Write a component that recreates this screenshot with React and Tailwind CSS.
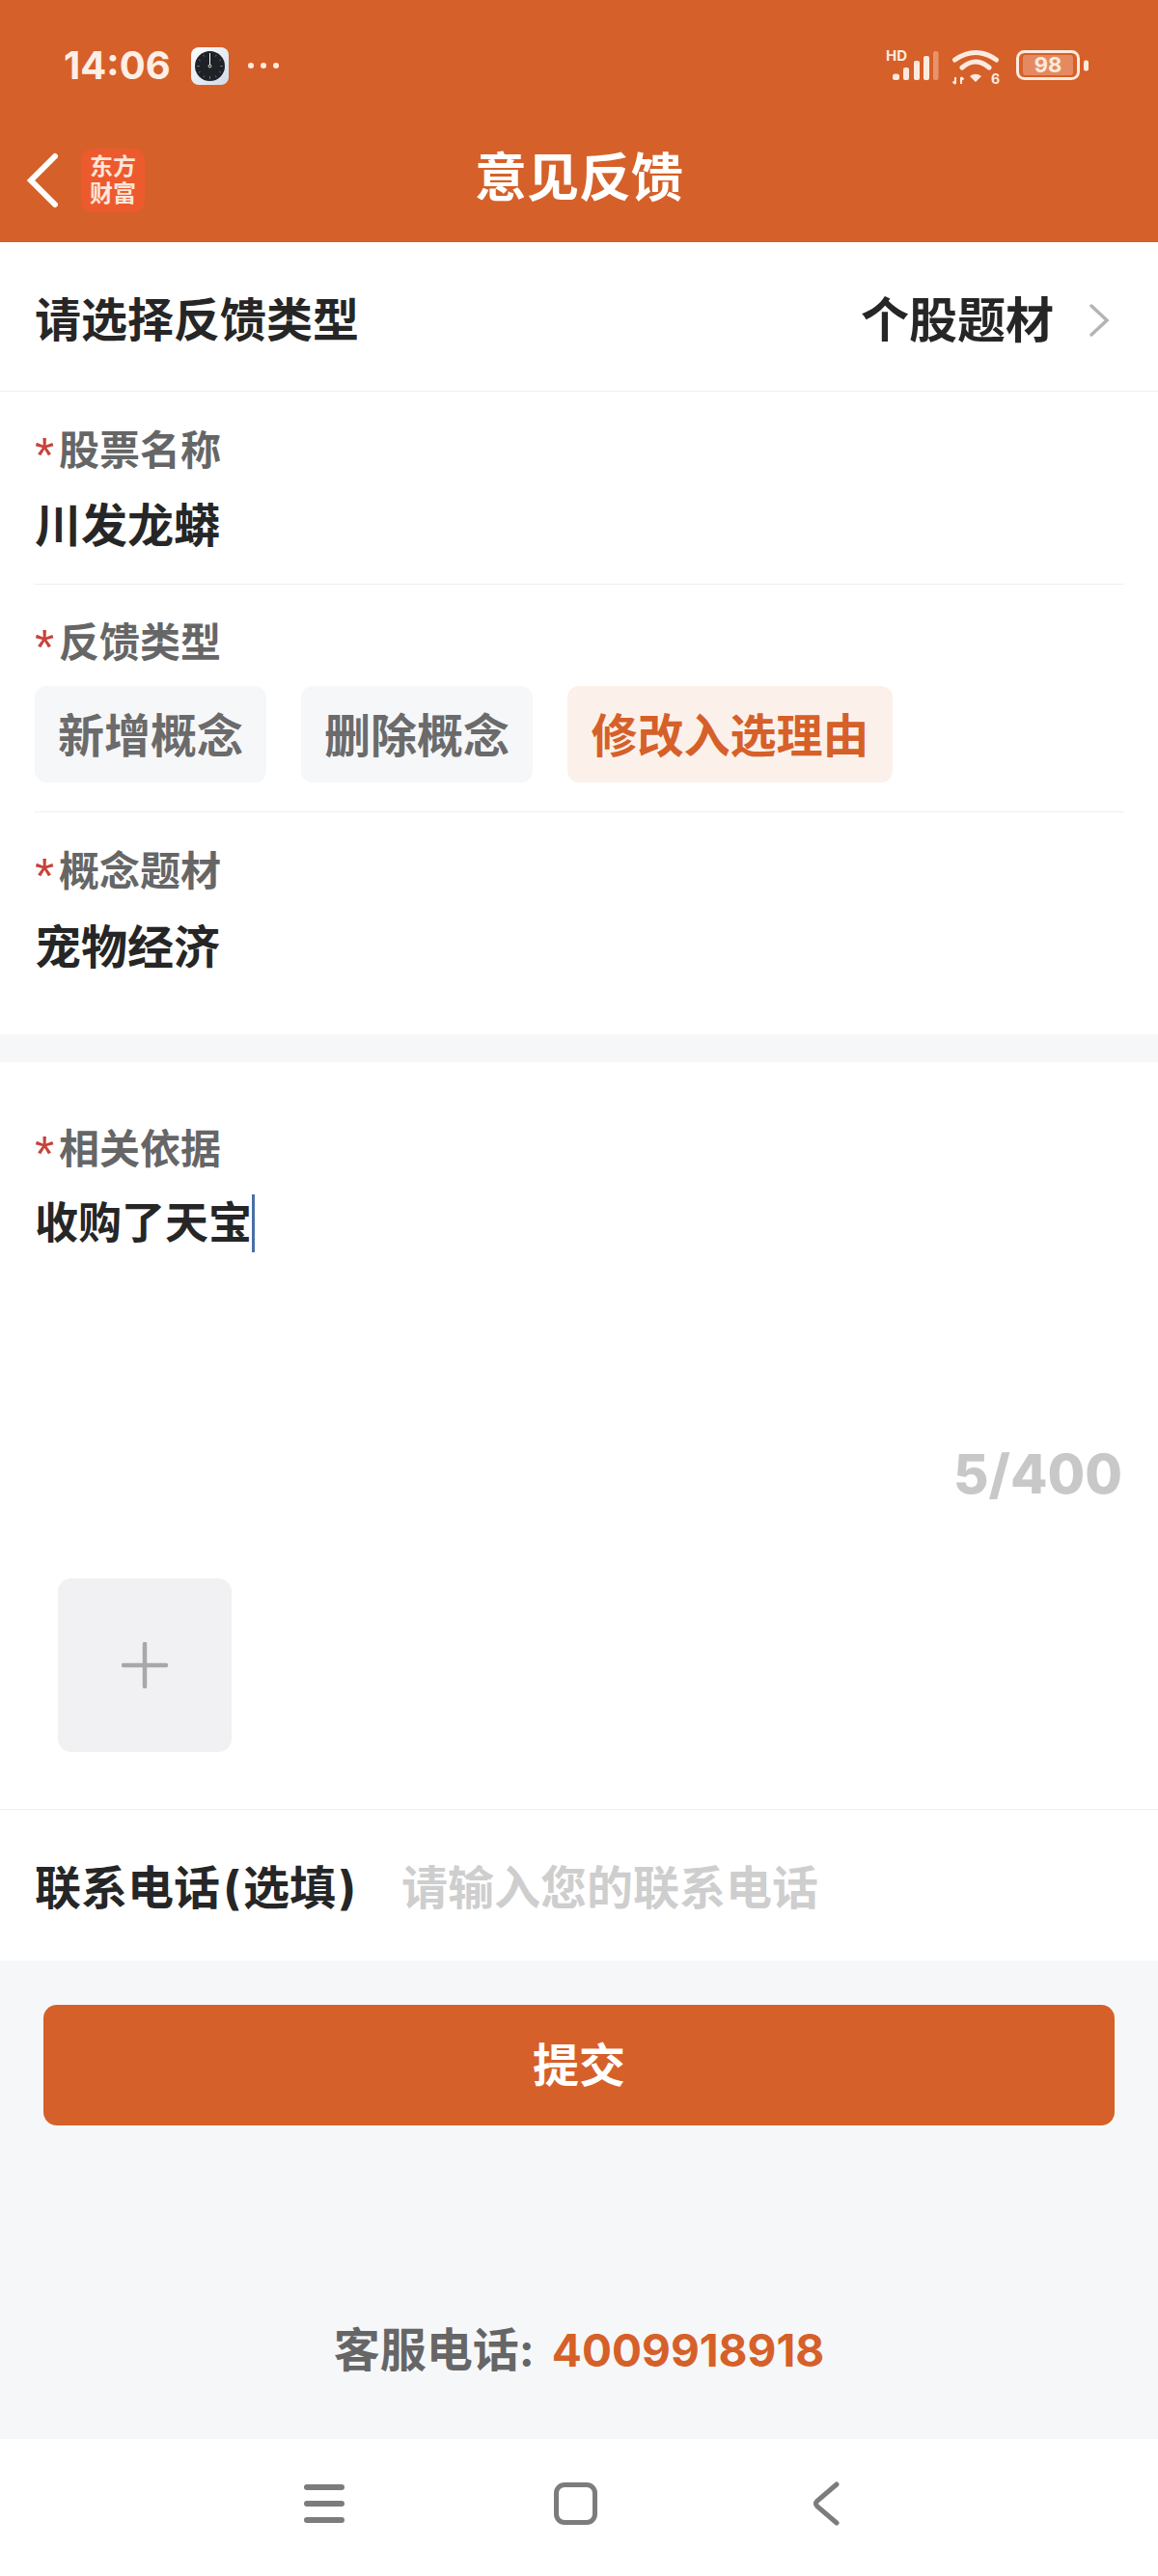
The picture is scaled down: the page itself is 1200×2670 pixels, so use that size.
const cjk = "font-['Inter','Noto_Sans_CJK_SC',sans-serif]"

function ClockIcon() {
  return (
    <svg width="39" height="39" viewBox="0 0 39 39">
      <defs>
        <linearGradient id="tile" x1="0" y1="0" x2="1" y2="1">
          <stop offset="0" stopColor="#ffffff" />
          <stop offset="1" stopColor="#cfdbe8" />
        </linearGradient>
      </defs>
      <rect width="39" height="39" rx="8" fill="url(#tile)" />
      <circle cx="19.5" cy="19.5" r="15.5" fill="#1e2125" />
      <path d="M19.5 6v12" stroke="#fff" strokeWidth="1" />
      <circle cx="19.5" cy="19.5" r="1.4" fill="#1e2125" stroke="#fff" strokeWidth="0.9" />
      <path d="M19.5 30v3M6 19.5h3M30 19.5h3M12.8 7.9l1 1.7M26.2 7.9l-1 1.7M7.9 12.8l1.7 1M31.1 12.8l-1.7 1M7.9 26.2l1.7-1M31.1 26.2l-1.7-1M12.8 31.1l1-1.7M26.2 31.1l-1-1.7" stroke="#8d9094" strokeWidth="0.7" />
    </svg>
  )
}

function StatusRight() {
  return (
    <svg width="218" height="44" viewBox="0 0 218 44" className="shrink-0">
      <text x="3" y="17" fontFamily="Inter, sans-serif" fontWeight="700" fontSize="15" fill="#fdeadf">HD</text>
      <rect x="10" y="30.500" width="7" height="6.500" rx="2.500" fill="#fdeadf" />
      <rect x="21" y="24" width="6" height="13" rx="2" fill="#fdeadf" />
      <rect x="32" y="17" width="6" height="20" rx="2" fill="#fdeadf" />
      <rect x="42" y="12" width="6" height="25" rx="2" fill="#fdeadf" />
      <rect x="52" y="7" width="5.500" height="30" rx="2" fill="#e8936b" />
      <path d="M74.500 16Q96 1 117.500 16" fill="none" stroke="#fdeadf" strokeWidth="5" strokeLinecap="round" />
      <path d="M82 24Q96 12 110 24" fill="none" stroke="#fdeadf" strokeWidth="5" strokeLinecap="round" />
      <path d="M90 33Q96 28.500 102 33L96 39z" fill="#fdeadf" />
      <path d="M75 34v7M72.500 38.500L75 41M81 34v7M81 34l2.500 2.500" stroke="#fdeadf" strokeWidth="2" fill="none" />
      <text x="112" y="41" fontFamily="Inter, sans-serif" fontWeight="700" fontSize="14" fill="#fdeadf">6</text>
      <rect x="139.500" y="7.500" width="63" height="28" rx="7" fill="none" stroke="#fdeadf" strokeWidth="3" />
      <rect x="145" y="11" width="52" height="21" rx="3" fill="#e58a60" />
      <text x="171" y="29" textAnchor="middle" fontFamily="Inter, sans-serif" fontWeight="700" fontSize="22" fill="#fdeadf">98</text>
      <rect x="208" y="16.500" width="5" height="11" rx="2" fill="#fdeadf" />
    </svg>
  )
}

function Label({ children }) {
  return (
    <div className="flex items-center h-[40px] text-[42px] leading-[40px] font-bold text-[#666666]">
      <span className="w-[25px] text-[#c8423a] font-normal font-['Liberation_Sans'] text-[52px] leading-[40px] pt-[10px]">*</span>
      <span>{children}</span>
    </div>
  )
}

function Chip({ children, active }) {
  return (
    <div
      className={
        active
          ? 'h-[100px] w-[337px] pt-[3px] flex items-center justify-center rounded-[12px] bg-[#fbf1ea] text-[#d66029] text-[48px] font-bold'
          : 'h-[100px] w-[240px] pt-[3px] flex items-center justify-center rounded-[12px] bg-[#f6f7f9] text-[#6b6b6b] text-[48px] font-bold'
      }
    >
      {children}
    </div>
  )
}

export default function App() {
  return (
    <div className={`w-[1200px] h-[2670px] flex flex-col bg-[#f6f7f9] overflow-hidden ${cjk}`}>
      <header className="h-[251px] shrink-0 bg-[#d66029]">
        <div className="h-[136px] flex items-center justify-between pl-[66px] pr-[67px]">
          <div className="flex items-center">
            <span className="w-[132px] text-[40px] font-bold text-[#fdeee6] font-['Inter']">14:06</span>
            <ClockIcon />
            <div className="flex gap-[7px] ml-[20px]">
              <span className="w-[6px] h-[6px] rounded-full bg-[#fdeadf]" />
              <span className="w-[6px] h-[6px] rounded-full bg-[#fdeadf]" />
              <span className="w-[6px] h-[6px] rounded-full bg-[#fdeadf]" />
            </div>
          </div>
          <StatusRight />
        </div>
        <div className="relative h-[97px] flex items-center justify-center">
          <div className="absolute left-[26px] top-[18px] flex items-center">
            <svg width="34" height="60" viewBox="0 0 34 60">
              <path d="M31 5L6 30l25 25" fill="none" stroke="#ffffff" strokeWidth="6" strokeLinecap="round" strokeLinejoin="miter" />
            </svg>
            <div className="ml-[24px] w-[66px] h-[66px] rounded-[12px] bg-[#ec5a2e] flex flex-col items-center justify-center text-[24px] leading-[28px] font-bold text-[#fde6d8]">
              <span>东方</span>
              <span>财富</span>
            </div>
          </div>
          <h1 className="text-[54px] leading-[60px] font-bold text-white">意见反馈</h1>
        </div>
      </header>

      <main className="bg-white shrink-0">
        <div className="h-[155px] pt-[8px] flex items-center justify-between pl-[36px] pr-[49px] border-b border-[#f0f0f0]">
          <span className="text-[48px] font-bold text-[#262626]">请选择反馈类型</span>
          <div className="flex items-center gap-[36px]">
            <span className="text-[50px] font-bold text-[#262626]">个股题材</span>
            <svg width="23" height="36" viewBox="0 0 23 36">
              <path d="M3 3l16 15L3 33" fill="none" stroke="#b4b4b4" strokeWidth="3.500" strokeLinecap="round" />
            </svg>
          </div>
        </div>

        <div className="pl-[36px] pr-[35px]">
          <div className="pt-[41px] h-[200px] border-b border-[#f0f0f0]">
            <Label>股票名称</Label>
            <div className="mt-[30px] h-[56px] text-[48px] leading-[56px] font-bold text-[#262626]">川发龙蟒</div>
          </div>
          <div className="pt-[40px] h-[236px] border-b border-[#f0f0f0]">
            <Label>反馈类型</Label>
            <div className="mt-[25px] flex gap-[36px]">
              <Chip>新增概念</Chip>
              <Chip>删除概念</Chip>
              <Chip active>修改入选理由</Chip>
            </div>
          </div>
          <div className="pt-[41px] h-[230px]">
            <Label>概念题材</Label>
            <div className="mt-[31px] h-[56px] text-[48px] leading-[56px] font-bold text-[#262626]">宠物经济</div>
          </div>
        </div>
      </main>

      <div className="h-[29px] shrink-0" />

      <section className="bg-white shrink-0">
        <div className="h-[775px] pl-[36px] pr-[37px] pt-[70px] border-b border-[#f0f0f0]">
          <Label>相关依据</Label>
          <div className="mt-[27px] flex items-center h-[60px] text-[45px] leading-[56px] font-bold text-[#262626]">
            <span>收购了天宝</span>
            <span className="w-[3px] h-[60px] bg-[#4a6fa5]" />
          </div>
          <div className="mt-[200px] h-[60px] text-right text-[56px] leading-[60px] font-extrabold text-[#c8c8c8]">5/400</div>
          <div className="mt-[78px] ml-[24px] w-[180px] h-[180px] rounded-[14px] bg-[#f1f1f3] flex items-center justify-center">
            <svg width="48" height="48" viewBox="0 0 48 48">
              <path d="M24 2v44M2 24h44" stroke="#a8a8a8" strokeWidth="4.500" strokeLinecap="round" />
            </svg>
          </div>
        </div>
        <div className="h-[156px] pt-[5px] flex items-center pl-[36px]">
          <span className="w-[380px] text-[48px] font-bold text-[#262626]">
            联系电话<span className="mx-[3px]">(</span>选填<span className="mx-[3px]">)</span>
          </span>
          <span className="text-[48px] font-bold text-[#cecece]">请输入您的联系电话</span>
        </div>
      </section>

      <div className="flex-1 min-h-0 px-[45px] pt-[46px] flex flex-col">
        <button className="h-[125px] shrink-0 rounded-[14px] bg-[#d66029] text-white text-[48px] font-bold">提交</button>
        <div className="mt-[203px] flex items-center justify-center text-[46px] leading-[60px] font-bold text-[#666666]">
          <span className="text-[48px]">客服电话:</span>
          <span className="ml-[18px] text-[#d66029]">4009918918</span>
        </div>
      </div>

      <nav className="h-[142px] shrink-0 bg-white flex items-center justify-center pr-[8px] pb-[8px]">
        <div className="w-[260px] flex justify-center">
          <svg width="44" height="40" viewBox="0 0 44 40">
            <path d="M4 3h36M4 20h36M4 37h36" stroke="#7c7c7c" strokeWidth="6" strokeLinecap="round" />
          </svg>
        </div>
        <div className="w-[260px] flex justify-center">
          <div className="w-[45px] h-[44px] rounded-[11px] border-[5px] border-[#7c7c7c]" />
        </div>
        <div className="w-[260px] flex justify-center">
          <svg width="30" height="46" viewBox="0 0 30 46">
            <path d="M26 3L6 20q-3 3 0 6l20 17" fill="none" stroke="#7c7c7c" strokeWidth="5" strokeLinecap="round" />
          </svg>
        </div>
      </nav>
    </div>
  )
}
